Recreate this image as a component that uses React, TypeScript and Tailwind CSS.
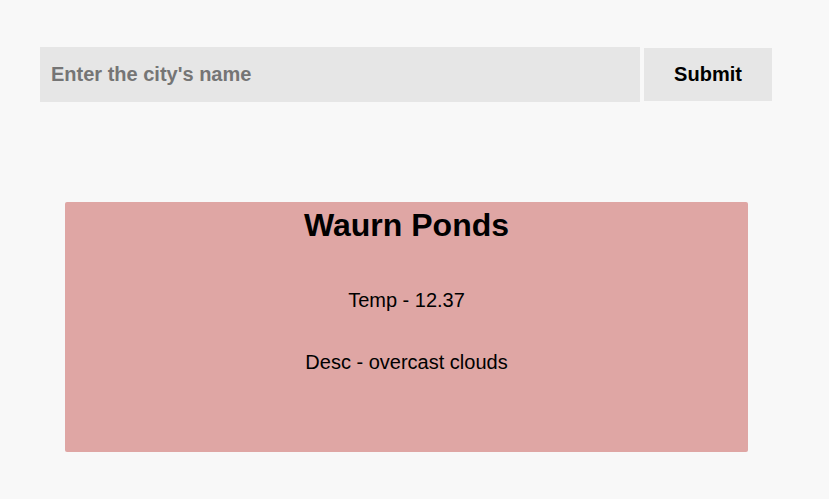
export default function App() {
  return (
    <div className="min-h-[499px] w-full bg-[#f8f8f8] font-['Liberation_Sans',Arial,sans-serif] text-black">
      <div className="flex items-center gap-1 pl-10 pt-[47px]">
        <input
          type="text"
          placeholder="Enter the city's name"
          className="h-[55px] w-[600px] bg-[#e6e6e6] px-[11px] pb-[1px] text-[20px] font-bold outline-none placeholder:text-[#757575]"
        />
        <button className="h-[53px] w-[128px] bg-[#e6e6e6] pb-[2px] text-[20px] font-bold">Submit</button>
      </div>

      <div className="ml-[65px] mt-[100px] flex h-[250px] w-[683px] flex-col items-center rounded-[2px] bg-[#dfa6a4]">
        <h1 className="mt-[5px] text-[32px] font-bold leading-[37px]">Waurn Ponds</h1>
        <p className="mt-[45px] text-[20px] leading-[23px]">Temp - 12.37</p>
        <p className="mt-[39px] text-[20px] leading-[23px]">Desc - overcast clouds</p>
      </div>
    </div>
  )
}
